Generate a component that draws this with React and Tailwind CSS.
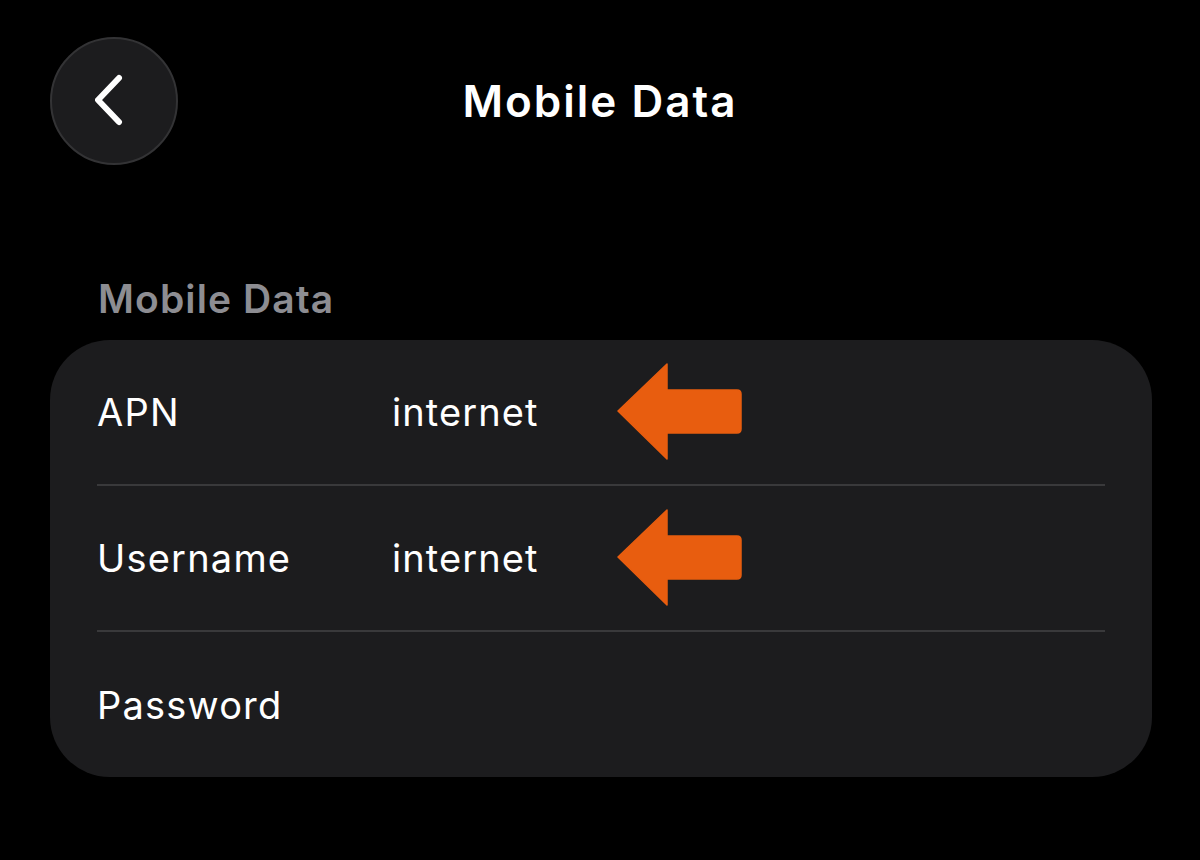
const rows = [
  { label: 'APN', value: 'internet', arrow: true },
  { label: 'Username', value: 'internet', arrow: true },
  { label: 'Password', value: '', arrow: false },
];

const Arrow = () => (
  <svg width="125" height="98" viewBox="0 0 125 98" className="shrink-0">
    <path
      d="M1 48 L50 1 L50 27 L120 27 Q124 27 124 31 L124 66 Q124 70 120 70 L50 70 L50 96 Z"
      fill="#e85d0f"
      stroke="#e85d0f"
      strokeWidth="1.5"
      strokeLinejoin="round"
    />
  </svg>
);

const App = () => {
  return (
    <div
      className="w-[1200px] h-[860px] bg-black text-white overflow-hidden"
      style={{ fontFamily: 'Inter, "Noto Sans", sans-serif' }}
    >
      {/* Header */}
      <div className="grid grid-cols-[128px_1fr_128px] items-center pl-[50px] pr-[50px] pt-[37px]">
        <button className="w-[128px] h-[128px] rounded-full bg-[#1c1c1e] border-2 border-[#333335] flex items-center justify-center">
          <svg width="34" height="54" viewBox="0 0 34 54" className="-translate-x-[2px]">
            <polyline
              points="24,4 3,26 24,48"
              fill="none"
              stroke="white"
              strokeWidth="6"
              strokeLinecap="round"
              strokeLinejoin="round"
            />
          </svg>
        </button>
        <h1 className="text-center text-[44px] font-semibold tracking-[2px] leading-none">Mobile Data</h1>
        <div />
      </div>

      {/* Section */}
      <div className="pl-[50px] pr-[48px] mt-[114px]">
        <p className="pl-[48px] text-[39px] font-semibold text-[#8d8d92] tracking-[1.1px] leading-none">
          Mobile Data
        </p>
        <div className="mt-[22px] bg-[#1c1c1e] rounded-[60px] px-[47px]">
          {rows.map((row, i) => (
            <div
              key={row.label}
              className={`flex items-center ${
                i < rows.length - 1 ? 'h-[146px] border-b-2 border-[#39393b]' : 'h-[145px]'
              }`}
            >
              <span className="w-[295px] text-[38px] tracking-[1.2px] leading-none">{row.label}</span>
              <span className="w-[225px] text-[38px] tracking-[1.1px] leading-none">{row.value}</span>
              {row.arrow && <Arrow />}
            </div>
          ))}
        </div>
      </div>
    </div>
  );
};

export default App;
